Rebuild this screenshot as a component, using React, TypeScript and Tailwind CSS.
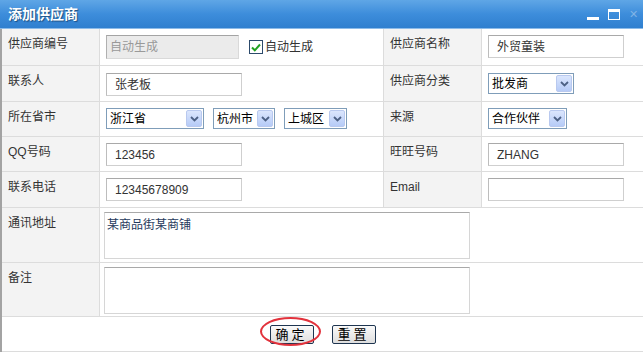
import React from "react";

const font = { fontFamily: '"Liberation Sans", "Noto Sans CJK SC", sans-serif' };

const Label = ({ children, right }: { children: React.ReactNode; right?: boolean }) => (
  <div
    className={
      "border-b border-r border-[#dcdcdc] bg-[#f3f3f3] pl-[6px] pt-[8px] text-[12px] leading-[14px] text-[#333]" +
      (right ? " pl-[5px]" : "")
    }
  >
    {children}
  </div>
);

const Cell = ({ children, last }: { children?: React.ReactNode; last?: boolean }) => (
  <div className={"border-b border-[#dcdcdc] pl-[6px] pt-[6px]" + (last ? "" : " border-r")}>{children}</div>
);

const TextInput = ({ value, w = "w-[136px]" }: { value?: string; w?: string }) => (
  <div
    className={
      w +
      " flex h-[23px] items-center border border-[#cfcfcf] border-t-[#a9a9a9] border-l-[#bdbdbd] bg-white pl-[8px] text-[12px] text-[#333]"
    }
  >
    {value}
  </div>
);

const Chevron = () => (
  <svg width="9" height="6" viewBox="0 0 9 6">
    <path d="M1 1 L4.5 4.5 L8 1" fill="none" stroke="#4d6185" strokeWidth="1.8" />
  </svg>
);

const Select = ({ value, w }: { value: string; w: string }) => (
  <div className={w + " flex h-[21px] items-center border border-[#7f9db9] bg-white pl-[3px] pr-[1px]"}>
    <span className="flex-1 text-[12px] text-black">{value}</span>
    <span className="flex h-[17px] w-[16px] items-center justify-center rounded-[2px] border border-[#b9c9ef] bg-gradient-to-b from-[#dbe6fd] to-[#b6cbf7]">
      <Chevron />
    </span>
  </div>
);

export default function App() {
  return (
    <div className="h-[356px] w-[643px] overflow-hidden bg-white" style={font}>
      {/* title bar */}
      <div className="flex h-[29px] items-center border-b border-[#8cbbe9] bg-gradient-to-b from-[#5fa6e6] via-[#3d8ddb] to-[#2f7fcf] pl-[8px] pr-[5px]">
        <span className="flex-1 text-[14px] font-bold text-white [text-shadow:1px_1px_1px_#1d4f80]">添加供应商</span>
        <div className="flex items-center gap-[9px]">
          <span className="mt-[8px] block h-[3px] w-[12px] bg-white" />
          <span className="block h-[11px] w-[12px] border border-t-[3px] border-white" />
          <span className="text-[11px] leading-none text-[#7fb3e6]">✕</span>
        </div>
      </div>

      <div className="border-l-[2px] border-[#a3a3a3]">
        <div className="grid grid-cols-[98px_284px_98px_1fr] grid-rows-[37px_36px_35px_35px_36px_55px_54px_35px]">
          {/* row 1 */}
          <Label>供应商编号</Label>
          <Cell>
            <div className="flex items-center">
              <div className="flex h-[24px] w-[133px] items-center border border-[#d9d9d9] border-t-[#a4a4a4] border-l-[#b0b0b0] bg-[#ebebeb] pl-[3px] text-[12px] text-[#999]">
                自动生成
              </div>
              <span className="ml-[10px] flex h-[14px] w-[14px] items-center justify-center border border-[#2c4a6b] bg-white">
                <svg width="10" height="9" viewBox="0 0 10 9">
                  <path d="M1 4.5 L3.8 7.3 L9 1.5" fill="none" stroke="#21a121" strokeWidth="2" />
                </svg>
              </span>
              <span className="ml-[2px] text-[12px] text-[#333]">自动生成</span>
            </div>
          </Cell>
          <Label right>供应商名称</Label>
          <Cell last>
            <TextInput value="外贸童装" />
          </Cell>

          {/* row 2 */}
          <Label>联系人</Label>
          <Cell>
            <div className="pt-px">
              <TextInput value=" 张老板" />
            </div>
          </Cell>
          <Label right>供应商分类</Label>
          <Cell last>
            <div className="pt-px">
              <Select value="批发商" w="w-[86px]" />
            </div>
          </Cell>

          {/* row 3 */}
          <Label>所在省市</Label>
          <Cell>
            <div className="flex gap-[9px]">
              <Select value="浙江省" w="w-[98px]" />
              <Select value="杭州市" w="w-[62px]" />
              <Select value="上城区" w="w-[63px]" />
            </div>
          </Cell>
          <Label right>来源</Label>
          <Cell last>
            <Select value="合作伙伴" w="w-[79px]" />
          </Cell>

          {/* row 4 */}
          <Label>QQ号码</Label>
          <Cell>
            <TextInput value="123456" />
          </Cell>
          <Label right>旺旺号码</Label>
          <Cell last>
            <TextInput value="ZHANG" />
          </Cell>

          {/* row 5 */}
          <Label>联系电话</Label>
          <Cell>
            <TextInput value="12345678909" />
          </Cell>
          <Label right>Email</Label>
          <Cell last>
            <TextInput />
          </Cell>

          {/* row 6 */}
          <Label>通讯地址</Label>
          <div className="col-span-3 border-b border-[#dcdcdc] pl-[4px] pt-[4px]">
            <div className="h-[47px] w-[366px] border border-[#d6d6d6] border-t-[#a9a9a9] pl-[2px] pt-[5px] text-[12px] leading-[14px] text-[#1f3a5c]">
              某商品街某商铺
            </div>
          </div>

          {/* row 7 */}
          <Label>备注</Label>
          <div className="col-span-3 border-b border-[#dcdcdc] pl-[4px] pt-[4px]">
            <div className="h-[47px] w-[366px] border border-[#d6d6d6] border-t-[#a9a9a9]" />
          </div>

          {/* buttons */}
          <div className="col-span-4 flex items-start justify-center gap-[18px] border-b border-[#dcdcdc] pt-[8px]">
            <div className="relative">
              <button className="flex h-[19px] w-[44px] items-center justify-center rounded-[2px] border border-[#1e3550] bg-gradient-to-b from-[#fafafa] to-[#dedede] text-[13px] tracking-[3px] text-black">
                确定
              </button>
              <span className="pointer-events-none absolute left-[-10px] top-[-8px] h-[29px] w-[61px] rounded-[50%] border-[2px] border-[#e2323c]" />
            </div>
            <button className="flex h-[19px] w-[44px] items-center justify-center rounded-[2px] border border-[#1e3550] bg-gradient-to-b from-[#fafafa] to-[#dedede] text-[13px] tracking-[3px] text-black">
              重置
            </button>
          </div>
        </div>
      </div>
    </div>
  );
}
